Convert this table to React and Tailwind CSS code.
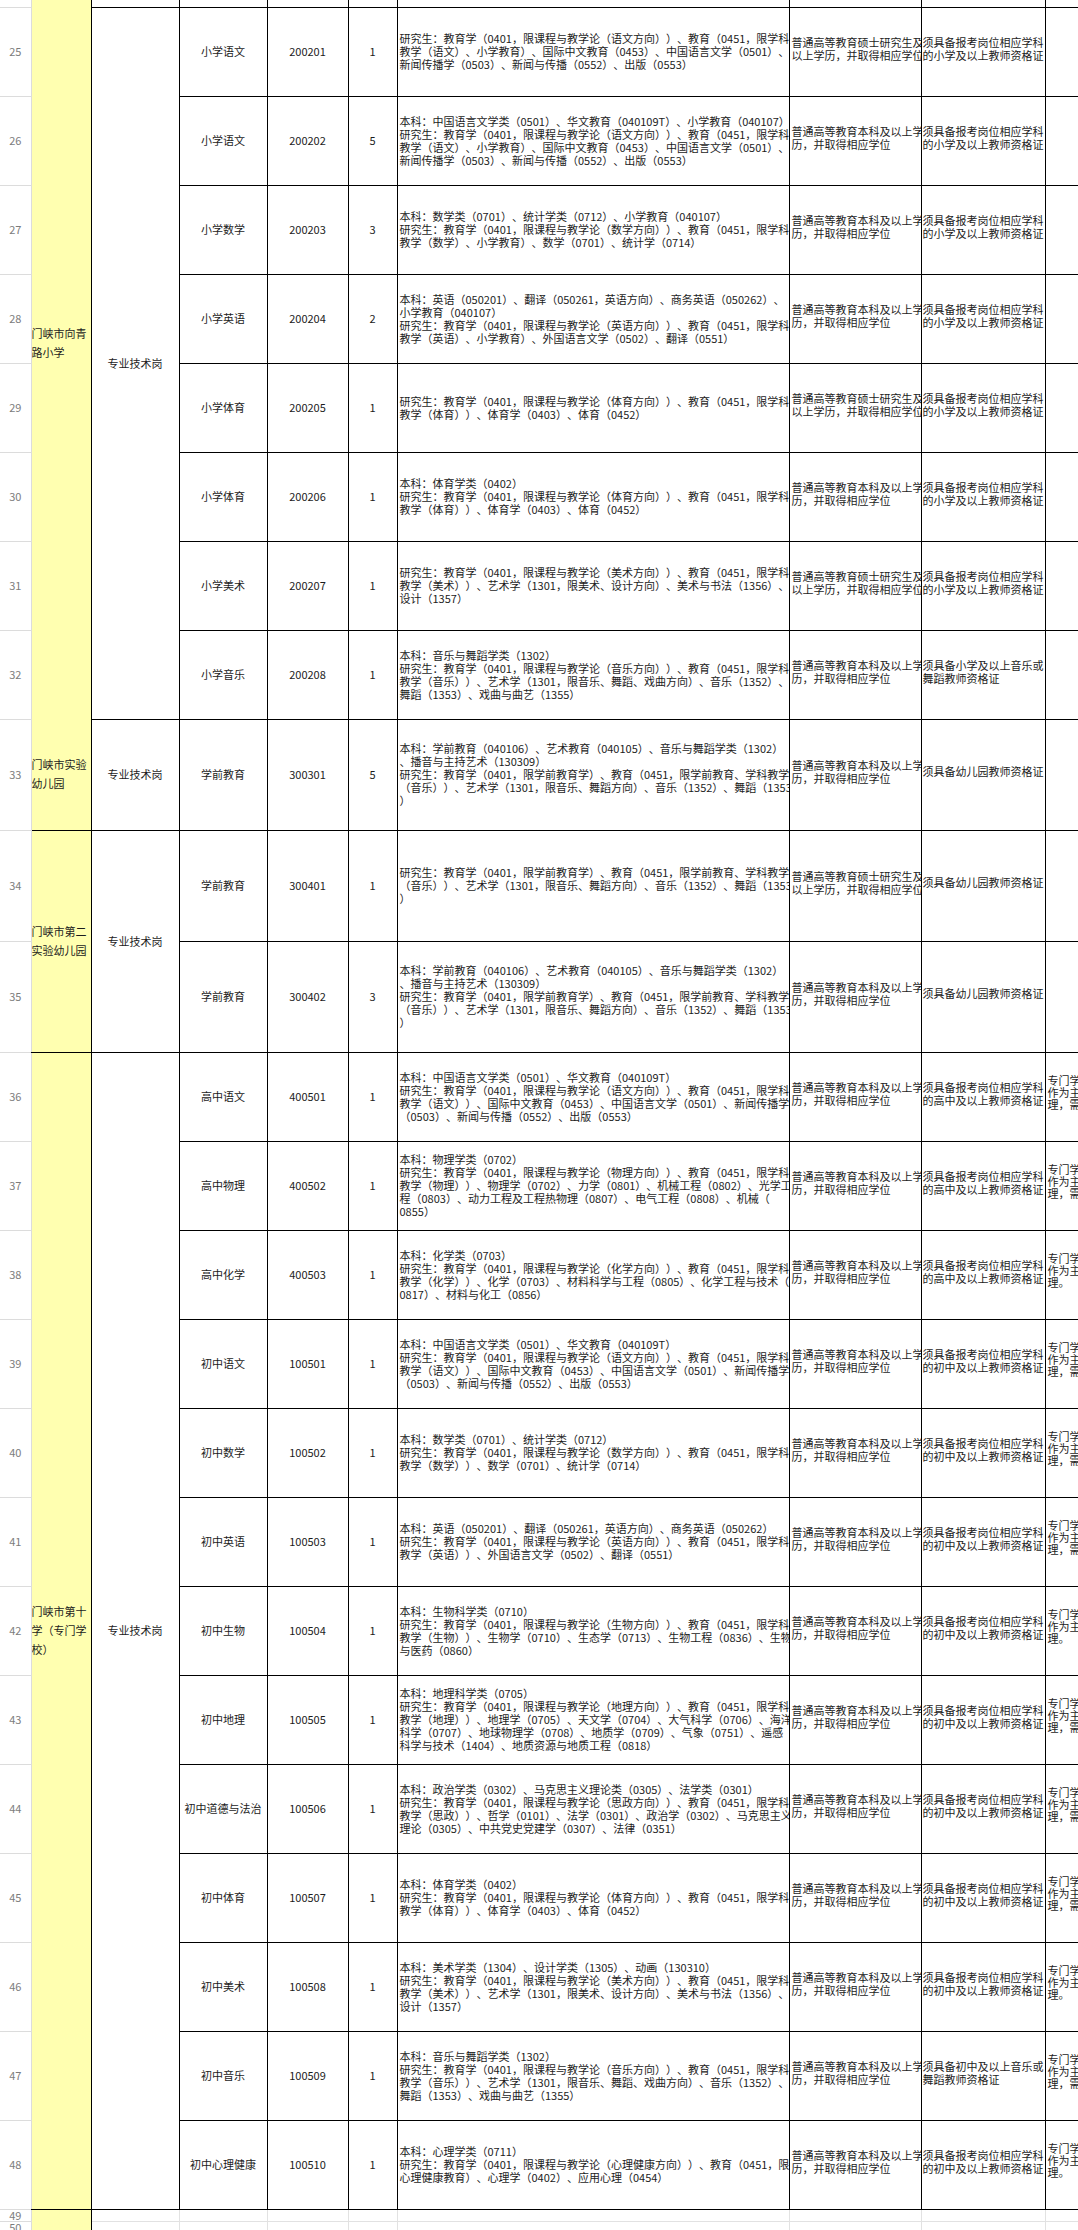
const MASTER = ["普通高等教育硕士研究生及", "以上学历，并取得相应学位"];
const BACHELOR = ["普通高等教育本科及以上学", "历，并取得相应学位"];
const PRIMARY = ["须具备报考岗位相应学科", "的小学及以上教师资格证"];
const HIGH = ["须具备报考岗位相应学科", "的高中及以上教师资格证"];
const MIDDLE = ["须具备报考岗位相应学科", "的初中及以上教师资格证"];
const KINDER = ["须具备幼儿园教师资格证"];
const J_A = ["专门学", "作为主", "理，需"];
const J_B = ["专门学", "作为主", "理。"];

const PRE_BK = ["本科：学前教育（040106）、艺术教育（040105）、音乐与舞蹈学类（1302）", "、播音与主持艺术（130309）"];
const PRE_YJS = [
  "研究生：教育学（0401，限学前教育学）、教育（0451，限学前教育、学科教学",
  "（音乐））、艺术学（1301，限音乐、舞蹈方向）、音乐（1352）、舞蹈（1353",
  "）",
];
const YW_MID = [
  "本科：中国语言文学类（0501）、华文教育（040109T）",
  "研究生：教育学（0401，限课程与教学论（语文方向））、教育（0451，限学科",
  "教学（语文））、国际中文教育（0453）、中国语言文学（0501）、新闻传播学",
  "（0503）、新闻与传播（0552）、出版（0553）",
];
const TY = [
  "研究生：教育学（0401，限课程与教学论（体育方向））、教育（0451，限学科",
  "教学（体育））、体育学（0403）、体育（0452）",
];
const MS = [
  "研究生：教育学（0401，限课程与教学论（美术方向））、教育（0451，限学科",
  "教学（美术））、艺术学（1301，限美术、设计方向）、美术与书法（1356）、",
  "设计（1357）",
];
const YY = [
  "本科：音乐与舞蹈学类（1302）",
  "研究生：教育学（0401，限课程与教学论（音乐方向））、教育（0451，限学科",
  "教学（音乐））、艺术学（1301，限音乐、舞蹈、戏曲方向）、音乐（1352）、",
  "舞蹈（1353）、戏曲与曲艺（1355）",
];

const rows = [
  {
    n: 25, d: "小学语文", e: "200201", f: "1", h: MASTER, i: PRIMARY,
    g: [
      "研究生：教育学（0401，限课程与教学论（语文方向））、教育（0451，限学科",
      "教学（语文）、小学教育）、国际中文教育（0453）、中国语言文学（0501）、",
      "新闻传播学（0503）、新闻与传播（0552）、出版（0553）",
    ],
  },
  {
    n: 26, d: "小学语文", e: "200202", f: "5", h: BACHELOR, i: PRIMARY,
    g: [
      "本科：中国语言文学类（0501）、华文教育（040109T）、小学教育（040107）",
      "研究生：教育学（0401，限课程与教学论（语文方向））、教育（0451，限学科",
      "教学（语文）、小学教育）、国际中文教育（0453）、中国语言文学（0501）、",
      "新闻传播学（0503）、新闻与传播（0552）、出版（0553）",
    ],
  },
  {
    n: 27, d: "小学数学", e: "200203", f: "3", h: BACHELOR, i: PRIMARY,
    g: [
      "本科：数学类（0701）、统计学类（0712）、小学教育（040107）",
      "研究生：教育学（0401，限课程与教学论（数学方向））、教育（0451，限学科",
      "教学（数学）、小学教育）、数学（0701）、统计学（0714）",
    ],
  },
  {
    n: 28, d: "小学英语", e: "200204", f: "2", h: BACHELOR, i: PRIMARY,
    g: [
      "本科：英语（050201）、翻译（050261，英语方向）、商务英语（050262）、",
      "小学教育（040107）",
      "研究生：教育学（0401，限课程与教学论（英语方向））、教育（0451，限学科",
      "教学（英语）、小学教育）、外国语言文学（0502）、翻译（0551）",
    ],
  },
  { n: 29, d: "小学体育", e: "200205", f: "1", h: MASTER, i: PRIMARY, g: TY },
  { n: 30, d: "小学体育", e: "200206", f: "1", h: BACHELOR, i: PRIMARY, g: ["本科：体育学类（0402）", ...TY] },
  { n: 31, d: "小学美术", e: "200207", f: "1", h: MASTER, i: PRIMARY, g: MS },
  { n: 32, d: "小学音乐", e: "200208", f: "1", h: BACHELOR, i: ["须具备小学及以上音乐或", "舞蹈教师资格证"], g: YY },
  { n: 33, d: "学前教育", e: "300301", f: "5", h: BACHELOR, i: KINDER, g: [...PRE_BK, ...PRE_YJS], tall: true },
  { n: 34, d: "学前教育", e: "300401", f: "1", h: MASTER, i: KINDER, g: PRE_YJS, tall: true },
  { n: 35, d: "学前教育", e: "300402", f: "3", h: BACHELOR, i: KINDER, g: [...PRE_BK, ...PRE_YJS], tall: true },
  { n: 36, d: "高中语文", e: "400501", f: "1", h: BACHELOR, i: HIGH, j: J_A, g: YW_MID },
  {
    n: 37, d: "高中物理", e: "400502", f: "1", h: BACHELOR, i: HIGH, j: J_A,
    g: [
      "本科：物理学类（0702）",
      "研究生：教育学（0401，限课程与教学论（物理方向））、教育（0451，限学科",
      "教学（物理））、物理学（0702）、力学（0801）、机械工程（0802）、光学工",
      "程（0803）、动力工程及工程热物理（0807）、电气工程（0808）、机械（",
      "0855）",
    ],
  },
  {
    n: 38, d: "高中化学", e: "400503", f: "1", h: BACHELOR, i: HIGH, j: J_B,
    g: [
      "本科：化学类（0703）",
      "研究生：教育学（0401，限课程与教学论（化学方向））、教育（0451，限学科",
      "教学（化学））、化学（0703）、材料科学与工程（0805）、化学工程与技术（",
      "0817）、材料与化工（0856）",
    ],
  },
  { n: 39, d: "初中语文", e: "100501", f: "1", h: BACHELOR, i: MIDDLE, j: J_A, g: YW_MID },
  {
    n: 40, d: "初中数学", e: "100502", f: "1", h: BACHELOR, i: MIDDLE, j: J_A,
    g: [
      "本科：数学类（0701）、统计学类（0712）",
      "研究生：教育学（0401，限课程与教学论（数学方向））、教育（0451，限学科",
      "教学（数学））、数学（0701）、统计学（0714）",
    ],
  },
  {
    n: 41, d: "初中英语", e: "100503", f: "1", h: BACHELOR, i: MIDDLE, j: J_A,
    g: [
      "本科：英语（050201）、翻译（050261，英语方向）、商务英语（050262）",
      "研究生：教育学（0401，限课程与教学论（英语方向））、教育（0451，限学科",
      "教学（英语））、外国语言文学（0502）、翻译（0551）",
    ],
  },
  {
    n: 42, d: "初中生物", e: "100504", f: "1", h: BACHELOR, i: MIDDLE, j: J_B,
    g: [
      "本科：生物科学类（0710）",
      "研究生：教育学（0401，限课程与教学论（生物方向））、教育（0451，限学科",
      "教学（生物））、生物学（0710）、生态学（0713）、生物工程（0836）、生物",
      "与医药（0860）",
    ],
  },
  {
    n: 43, d: "初中地理", e: "100505", f: "1", h: BACHELOR, i: MIDDLE, j: J_A,
    g: [
      "本科：地理科学类（0705）",
      "研究生：教育学（0401，限课程与教学论（地理方向））、教育（0451，限学科",
      "教学（地理））、地理学（0705）、天文学（0704）、大气科学（0706）、海洋",
      "科学（0707）、地球物理学（0708）、地质学（0709）、气象（0751）、遥感",
      "科学与技术（1404）、地质资源与地质工程（0818）",
    ],
  },
  {
    n: 44, d: "初中道德与法治", e: "100506", f: "1", h: BACHELOR, i: MIDDLE, j: J_A,
    g: [
      "本科：政治学类（0302）、马克思主义理论类（0305）、法学类（0301）",
      "研究生：教育学（0401，限课程与教学论（思政方向））、教育（0451，限学科",
      "教学（思政））、哲学（0101）、法学（0301）、政治学（0302）、马克思主义",
      "理论（0305）、中共党史党建学（0307）、法律（0351）",
    ],
  },
  { n: 45, d: "初中体育", e: "100507", f: "1", h: BACHELOR, i: MIDDLE, j: J_A, g: ["本科：体育学类（0402）", ...TY] },
  {
    n: 46, d: "初中美术", e: "100508", f: "1", h: BACHELOR, i: MIDDLE, j: J_B,
    g: ["本科：美术学类（1304）、设计学类（1305）、动画（130310）", ...MS],
  },
  { n: 47, d: "初中音乐", e: "100509", f: "1", h: BACHELOR, i: ["须具备初中及以上音乐或", "舞蹈教师资格证"], j: J_A, g: YY },
  {
    n: 48, d: "初中心理健康", e: "100510", f: "1", h: BACHELOR, i: MIDDLE, j: J_B,
    g: [
      "本科：心理学类（0711）",
      "研究生：教育学（0401，限课程与教学论（心理健康方向））、教育（0451，限",
      "心理健康教育）、心理学（0402）、应用心理（0454）",
    ],
  },
];

// merged cells in the unit / post-type columns, keyed by first row
const groups = {
  33: { span: 1, unit: ["门峡市实验", "幼儿园"] },
  34: { span: 2, unit: ["门峡市第二", "实验幼儿园"] },
  36: { span: 13, unit: ["门峡市第十", "学（专门学", "校）"] },
};

function Lines({ lines }) {
  return lines.map((l, k) => <div key={k}>{l}</div>);
}

const head = "border-r border-b border-[#dcdcdc] bg-white text-center text-[11px] text-[#7c7c7c]";
const cell = "border border-black text-center";
const yellow = "bg-[#ffffb0] border-r border-black";

export default function App() {
  return (
    <div className="w-[1078px] h-[2230px] overflow-hidden bg-white font-['Noto_Sans_CJK_SC','Liberation_Sans',sans-serif] text-[11px] leading-[13px] text-[#1c1c1c] [text-spacing-trim:space-all]">
      <table className="table-fixed border-collapse w-[1145px]">
        <colgroup>
          <col className="w-[31px]" />
          <col className="w-[60px]" />
          <col className="w-[88px]" />
          <col className="w-[88px]" />
          <col className="w-[81px]" />
          <col className="w-[49px]" />
          <col className="w-[392px]" />
          <col className="w-[132px]" />
          <col className="w-[124px]" />
          <col className="w-[100px]" />
        </colgroup>
        <tbody>
          <tr className="h-[7px]">
            <td className={head}></td>
            <td className={yellow} rowSpan={9}>
              <div className="overflow-hidden whitespace-nowrap pb-[34px] leading-[19px]">
                <div>门峡市向青</div>
                <div>路小学</div>
              </div>
            </td>
            <td className="border-r border-b border-black"></td>
            <td className="border-r border-b border-black"></td>
            <td className="border-r border-b border-black"></td>
            <td className="border-r border-b border-black"></td>
            <td className="border-r border-b border-black"></td>
            <td className="border-r border-b border-black"></td>
            <td className="border-r border-b border-black"></td>
            <td className="border-b border-black"></td>
          </tr>
          {rows.map((r) => {
            const grp = groups[r.n];
            return (
              <tr key={r.n} className={r.tall ? "h-[111px]" : "h-[89px]"}>
                <td className={head}>{r.n}</td>
                {grp && (
                  <td className={yellow + " border-b"} rowSpan={grp.span}>
                    <div className="overflow-hidden whitespace-nowrap leading-[19px]">
                      <Lines lines={grp.unit} />
                    </div>
                  </td>
                )}
                {r.n === 25 && (
                  <td className={cell} rowSpan={8}>专业技术岗</td>
                )}
                {grp && (
                  <td className={cell} rowSpan={grp.span}>专业技术岗</td>
                )}
                <td className={cell}>{r.d}</td>
                <td className={cell}>{r.e}</td>
                <td className={cell}>{r.f}</td>
                <td className="border border-black text-left">
                  <div className="overflow-hidden whitespace-nowrap pl-[2px]">
                    <Lines lines={r.g} />
                  </div>
                </td>
                <td className="border border-black text-left">
                  <div className="overflow-hidden whitespace-nowrap pl-[2px] pb-[6px]">
                    <Lines lines={r.h} />
                  </div>
                </td>
                <td className="border border-black text-left">
                  <div className="overflow-hidden whitespace-nowrap pl-[1px] pb-[6px]">
                    <Lines lines={r.i} />
                  </div>
                </td>
                <td className="border border-black text-left">
                  {r.j && (
                    <div className="overflow-hidden whitespace-nowrap pl-[2px] pb-[10px] leading-[12px]">
                      <Lines lines={r.j} />
                    </div>
                  )}
                </td>
              </tr>
            );
          })}
          {[49, 50].map((n) => (
            <tr key={n} className="h-[12px]">
              <td className={head + " leading-[11px]"}>{n}</td>
              {n === 49 && <td className="bg-[#ffffb0] border-r border-black" rowSpan={2}></td>}
              {[0, 1, 2, 3, 4, 5, 6, 7].map((k) => (
                <td key={k} className="border-r border-b border-[#e2e2e2]"></td>
              ))}
            </tr>
          ))}
        </tbody>
      </table>
    </div>
  );
}
